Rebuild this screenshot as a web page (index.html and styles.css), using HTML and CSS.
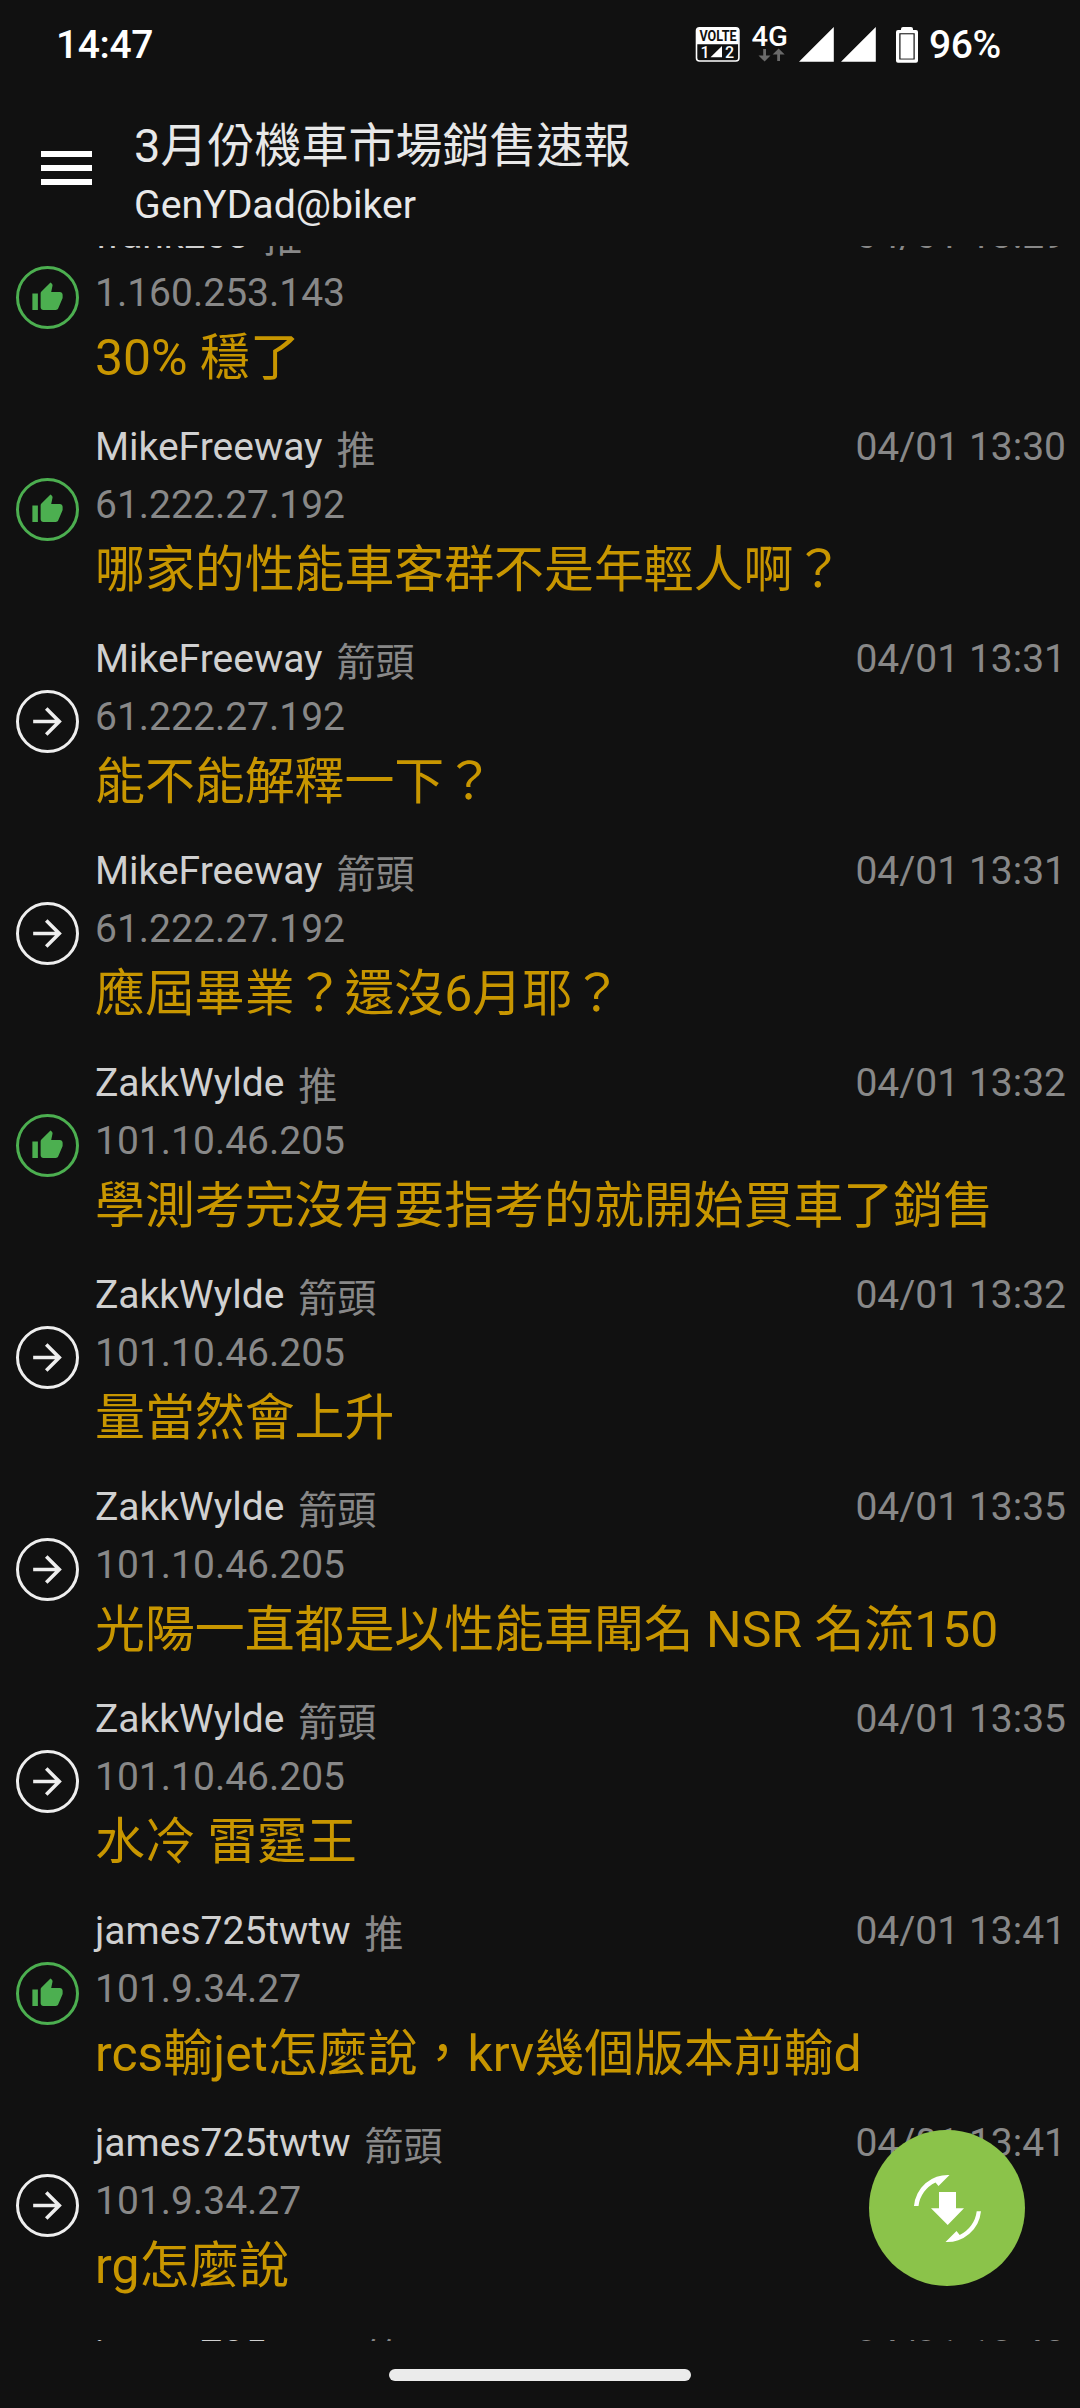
FILE: index.html
```html
<!DOCTYPE html>
<html lang="zh-Hant">
<head>
<meta charset="utf-8">
<title>3月份機車市場銷售速報</title>
<link rel="stylesheet" href="styles.css">
</head>
<body>
<svg class="defs" aria-hidden="true">
  <symbol id="up" viewBox="0 0 24 24"><path d="M1 21h4V9H1v12zm22-11c0-1.100-.9-2-2-2h-6.310l.95-4.570.03-.32c0-.41-.17-.79-.44-1.060L14.170 1 7.590 7.590C7.220 7.950 7 8.450 7 9v10c0 1.100.9 2 2 2h9c.83 0 1.540-.5 1.840-1.220l3.020-7.050c.09-.23.14-.47.14-.73v-2z"/></symbol>
  <symbol id="arrow" viewBox="0 0 24 24"><path d="M12 4l-1.410 1.410L16.170 11H4v2h12.170l-5.580 5.590L12 20l8-8z"/></symbol>
</svg>
<div class="screen">
  <div class="status">
    <span class="clock">14:47</span>
    <svg class="status-icons" width="230" height="44" viewBox="690 22 230 44">
      <rect x="696.500" y="27.800" width="42.400" height="33.200" rx="3" fill="none" stroke="#fff" stroke-width="1.600"/>
      <path d="M697 30q0-2 2-2h37.500q2 0 2 2v14.300H697z" fill="#fff"/>
      <text class="volte" x="699.500" y="41" textLength="37" lengthAdjust="spacingAndGlyphs">VOLTE</text>
      <text class="sim" x="700.500" y="57.500">1</text>
      <text class="sim" x="725" y="57.500">2</text>
      <path d="M710.500 57.200L722 46v11.200z" fill="#fff"/>
      <text class="net" x="751.500" y="46.300" textLength="36.500" lengthAdjust="spacingAndGlyphs">4G</text>
      <path d="M763.200 49h2.800v6.500h4.500L764.600 61.500 758.500 55.500h4.700zM777.200 61h2.800v-6.500h4.700L778.600 48.500l-6 6h4.600z" fill="#6a6a6a"/>
      <path d="M799 61.700L833.800 27v34.700zM841 61.700L875.800 27v34.700z" fill="#fff"/>
      <path fill-rule="evenodd" d="M901 29q0-2 2-2h8q2 0 2 2v1h3q2 0 2 2v28.800q0 2-2 2h-18q-2 0-2-2V32q0-2 2-2h3zM899.300 33.300v26.300h15.400V33.300z" fill="#fff"/>
      <rect x="900.500" y="34.300" width="13" height="24.300" fill="#fff"/>
    </svg>
    <span class="battery">96%</span>
  </div>
  <header class="bar">
    <div class="menu"><i></i><i></i><i></i></div>
    <div class="titles">
      <h1>3月份機車市場銷售速報</h1>
      <p>GenYDad@biker</p>
    </div>
  </header>
  <main class="list">
    <div class="row push"><span class="badge"><svg><use href="#up"/></svg></span><div class="body"><div class="head"><b>frank203</b><em>推</em><time>04/01 13:29</time></div><div class="ip">1.160.253.143</div><div class="text">30% 穩了</div></div></div>
    <div class="row push"><span class="badge"><svg><use href="#up"/></svg></span><div class="body"><div class="head"><b>MikeFreeway</b><em>推</em><time>04/01 13:30</time></div><div class="ip">61.222.27.192</div><div class="text">哪家的性能車客群不是年輕人啊？</div></div></div>
    <div class="row"><span class="badge"><svg><use href="#arrow"/></svg></span><div class="body"><div class="head"><b>MikeFreeway</b><em>箭頭</em><time>04/01 13:31</time></div><div class="ip">61.222.27.192</div><div class="text">能不能解釋一下？</div></div></div>
    <div class="row"><span class="badge"><svg><use href="#arrow"/></svg></span><div class="body"><div class="head"><b>MikeFreeway</b><em>箭頭</em><time>04/01 13:31</time></div><div class="ip">61.222.27.192</div><div class="text">應屆畢業？還沒6月耶？</div></div></div>
    <div class="row push"><span class="badge"><svg><use href="#up"/></svg></span><div class="body"><div class="head"><b>ZakkWylde</b><em>推</em><time>04/01 13:32</time></div><div class="ip">101.10.46.205</div><div class="text">學測考完沒有要指考的就開始買車了銷售</div></div></div>
    <div class="row"><span class="badge"><svg><use href="#arrow"/></svg></span><div class="body"><div class="head"><b>ZakkWylde</b><em>箭頭</em><time>04/01 13:32</time></div><div class="ip">101.10.46.205</div><div class="text">量當然會上升</div></div></div>
    <div class="row"><span class="badge"><svg><use href="#arrow"/></svg></span><div class="body"><div class="head"><b>ZakkWylde</b><em>箭頭</em><time>04/01 13:35</time></div><div class="ip">101.10.46.205</div><div class="text">光陽一直都是以性能車聞名 NSR 名流150</div></div></div>
    <div class="row"><span class="badge"><svg><use href="#arrow"/></svg></span><div class="body"><div class="head"><b>ZakkWylde</b><em>箭頭</em><time>04/01 13:35</time></div><div class="ip">101.10.46.205</div><div class="text">水冷 雷霆王</div></div></div>
    <div class="row push"><span class="badge"><svg><use href="#up"/></svg></span><div class="body"><div class="head"><b>james725twtw</b><em>推</em><time>04/01 13:41</time></div><div class="ip">101.9.34.27</div><div class="text">rcs輸jet怎麼說，krv幾個版本前輸d</div></div></div>
    <div class="row"><span class="badge"><svg><use href="#arrow"/></svg></span><div class="body"><div class="head"><b>james725twtw</b><em>箭頭</em><time>04/01 13:41</time></div><div class="ip">101.9.34.27</div><div class="text">rg怎麼說</div></div></div>
    <div class="row"><span class="badge"></span><div class="body"><div class="head"><b>james725twtw</b><em>箭頭</em><time>04/01 13:42</time></div></div></div>
  </main>
  <footer class="nav"><span class="pill"></span></footer>
  <div class="fab">
    <svg width="72" height="72" viewBox="911 2172 72 72" fill="#fff">
      <path d="M939 2192h17v16.300h8L947.700 2225 931 2208.300h8z"/>
      <path d="M914 2206A34 34 0 0 1 949.500 2175L938.500 2186 935.500 2182.500A30 30 0 0 0 918.500 2206z"/>
      <path d="M981 2211.300A34 34 0 0 1 945.500 2242L956.500 2231 959.700 2235A30 30 0 0 0 976.700 2211.300z"/>
    </svg>
  </div>
</div>
</body>
</html>
```
FILE: styles.css
```css
* { box-sizing: border-box; }
body {
  margin: 0;
  background: #111;
  font-family: Roboto, "Noto Sans CJK TC", sans-serif;
}
.defs { display: none; }
.screen {
  position: relative;
  width: 1080px;
  height: 2408px;
  display: flex;
  flex-direction: column;
  overflow: hidden;
}
.status {
  height: 88px;
  padding: 0 80px 0 56px;
  display: flex;
  align-items: flex-start;
  color: #fff;
  font-size: 39px;
  font-weight: 500;
  line-height: 90px;
  letter-spacing: -0.4px;
}
.clock { flex: 1; }
.status-icons { margin: 22px 9px 0 0; letter-spacing: 0; }
.battery { width: 71px; white-space: nowrap; }
.volte { font-size: 14.5px; font-weight: 700; fill: #111; }
.sim { font-size: 16px; font-weight: 500; fill: #fff; }
.net { font-size: 28.5px; font-weight: 500; fill: #fff; }
.bar {
  height: 158px;
  flex: none;
  display: flex;
  color: #e8e8e8;
}
.menu {
  width: 134px;
  padding: 63px 0 0 41px;
  display: flex;
  flex-direction: column;
  gap: 8px;
}
.menu i { width: 51px; height: 6px; background: #fff; }
.titles { padding-top: 24px; }
.titles h1 {
  margin: 0;
  font-size: 47px;
  font-weight: 400;
  line-height: 68px;
}
.titles p {
  margin: 0;
  font-size: 39.2px;
  line-height: 50px;
}
.list {
  height: 2095px;
  flex: none;
  overflow: hidden;
}
.row {
  height: 212px;
  display: flex;
  align-items: center;
  color: #eee;
}
.row:first-child { margin-top: -54.5px; }
.push { color: #4caf50; }
.badge {
  width: 63px;
  height: 63px;
  margin: 0 16px;
  border: 3px solid currentColor;
  border-radius: 50%;
  display: flex;
  align-items: center;
  justify-content: center;
}
.badge svg { width: 43px; height: 43px; fill: currentColor; }
.push .badge svg { width: 33px; height: 33px; }
.body { flex: 1; height: 185px; padding: 0.5px 14px 0 0; }
.head {
  height: 58px;
  display: flex;
  font-size: 39px;
  line-height: 58px;
  color: #888;
}
.head b { font-weight: 400; color: #d0d0d0; }
.head em { flex: 1; margin-left: 14px; padding-top: 4px; font-style: normal; }
.ip {
  font-size: 39px;
  line-height: 58px;
  color: #888;
}
.text {
  font-size: 49.9px;
  line-height: 73px;
  color: #c89600;
  white-space: nowrap;
}
.nav {
  height: 67px;
  display: flex;
  justify-content: center;
  padding-top: 28px;
}
.pill { width: 302px; height: 12px; border-radius: 6px; background: #ebebeb; }
.fab {
  position: absolute;
  left: 869px;
  top: 2130px;
  width: 156px;
  height: 156px;
  border-radius: 50%;
  background: #8bc34a;
  display: flex;
  align-items: center;
  justify-content: center;
}
```
